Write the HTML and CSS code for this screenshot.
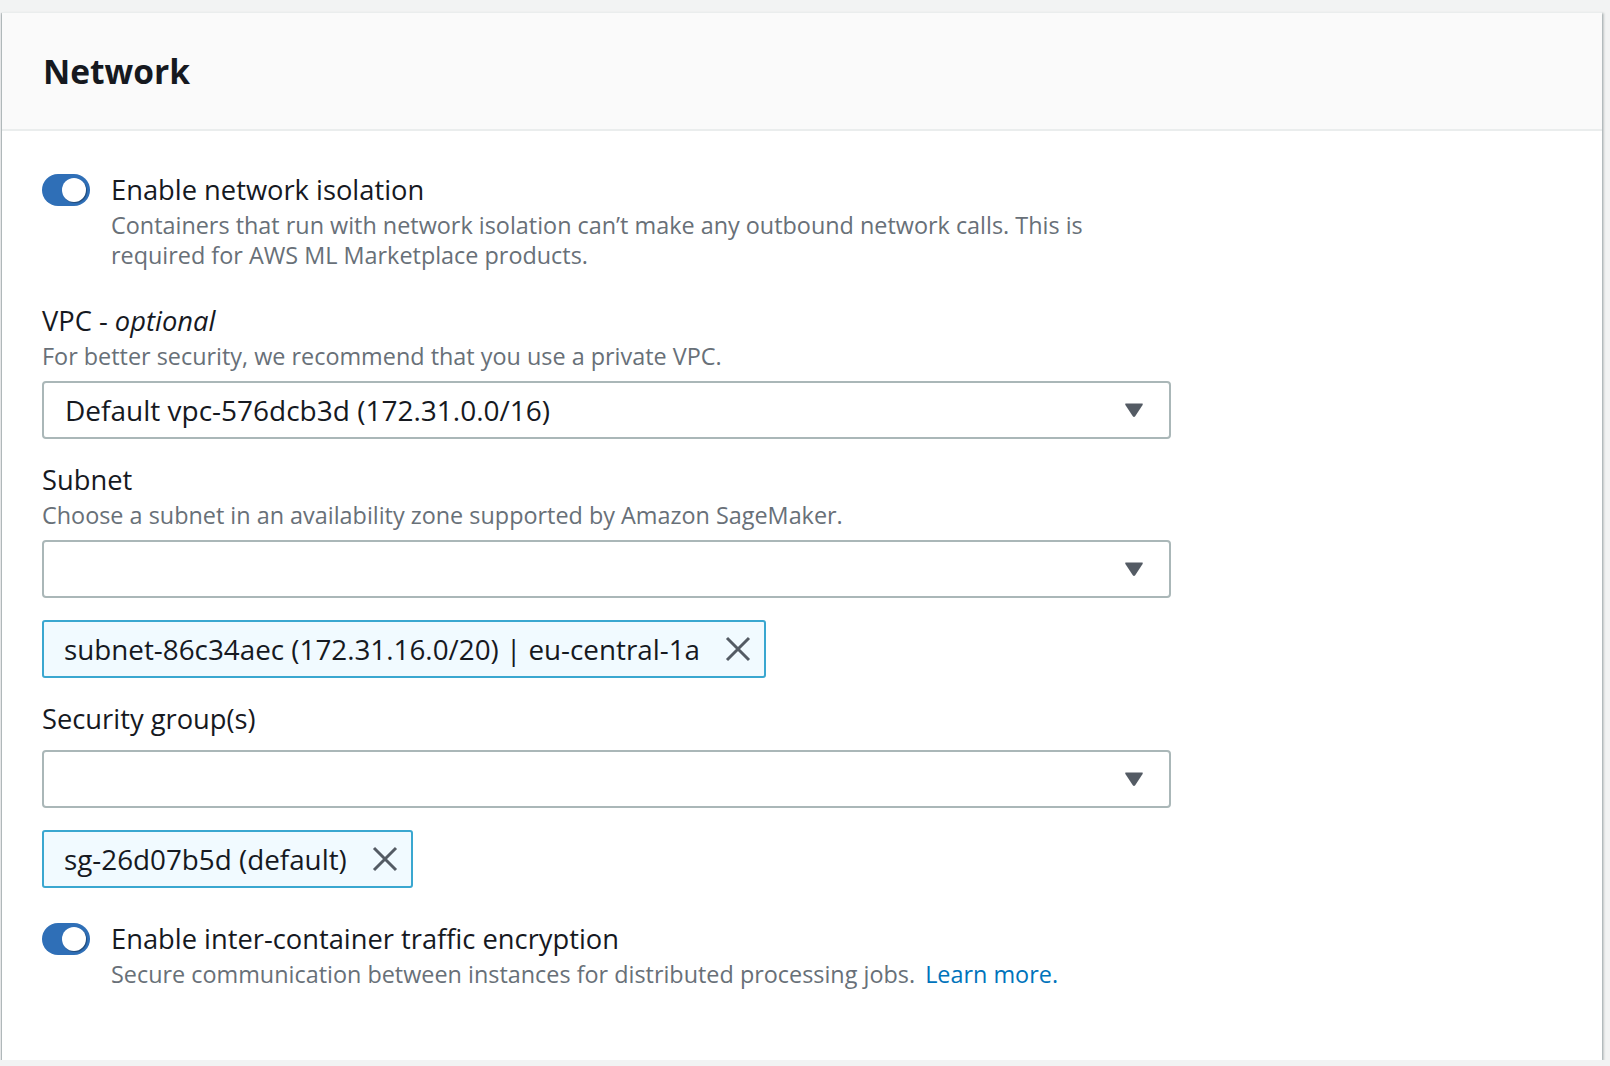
FILE: index.html
```html
<!DOCTYPE html>
<html lang="en">
<head>
<meta charset="utf-8">
<title>Network</title>
<link rel="stylesheet" href="styles.css">
</head>
<body>
<div class="page">
  <section class="card">
    <header class="card-header">
      <h2 class="card-title">Network</h2>
    </header>
    <div class="card-body">
      <div class="toggle-field">
        <span class="toggle"><span class="knob"></span></span>
        <div class="toggle-text">
          <div class="label">Enable network isolation</div>
          <div class="desc">Containers that run with network isolation can’t make any outbound network calls. This is<br>required for AWS ML Marketplace products.</div>
        </div>
      </div>

      <div class="field field-vpc">
        <div class="label">VPC - <i>optional</i></div>
        <div class="desc">For better security, we recommend that you use a private VPC.</div>
        <div class="select">
          <span class="select-value">Default vpc-576dcb3d (172.31.0.0/16)</span>
          <svg class="caret" width="20" height="16" viewBox="0 0 20 16"><path d="M2 1.5 H18 Q19.5 1.5 18.6 2.9 L11.2 14.2 Q10 15.8 8.8 14.2 L1.4 2.9 Q0.5 1.5 2 1.5 Z" fill="#545b64"/></svg>
        </div>
      </div>

      <div class="field">
        <div class="label">Subnet</div>
        <div class="desc">Choose a subnet in an availability zone supported by Amazon SageMaker.</div>
        <div class="select">
          <span class="select-value"></span>
          <svg class="caret" width="20" height="16" viewBox="0 0 20 16"><path d="M2 1.5 H18 Q19.5 1.5 18.6 2.9 L11.2 14.2 Q10 15.8 8.8 14.2 L1.4 2.9 Q0.5 1.5 2 1.5 Z" fill="#545b64"/></svg>
        </div>
        <div class="token">
          <span class="token-text">subnet-86c34aec (172.31.16.0/20) | eu-central-1a</span>
          <svg class="dismiss" width="26" height="26" viewBox="0 0 26 26"><path d="M2 2 L24 24 M24 2 L2 24" stroke="#545b64" stroke-width="3" fill="none"/></svg>
        </div>
      </div>

      <div class="field">
        <div class="label">Security group(s)</div>
        <div class="select select-nodesc">
          <span class="select-value"></span>
          <svg class="caret" width="20" height="16" viewBox="0 0 20 16"><path d="M2 1.5 H18 Q19.5 1.5 18.6 2.9 L11.2 14.2 Q10 15.8 8.8 14.2 L1.4 2.9 Q0.5 1.5 2 1.5 Z" fill="#545b64"/></svg>
        </div>
        <div class="token">
          <span class="token-text">sg-26d07b5d (default)</span>
          <svg class="dismiss" width="26" height="26" viewBox="0 0 26 26"><path d="M2 2 L24 24 M24 2 L2 24" stroke="#545b64" stroke-width="3" fill="none"/></svg>
        </div>
      </div>

      <div class="toggle-field toggle-field-last">
        <span class="toggle"><span class="knob"></span></span>
        <div class="toggle-text">
          <div class="label">Enable inter-container traffic encryption</div>
          <div class="desc">Secure communication between instances for distributed processing jobs. <a class="link" href="#">Learn more.</a></div>
        </div>
      </div>
    </div>
  </section>
</div>
</body>
</html>
```

FILE: styles.css
```css
html, body {
  margin: 0;
  padding: 0;
  background: #f2f3f3;
}

body {
  font-family: "Open Sans", "Noto Sans", "Liberation Sans", sans-serif;
  color: #16191f;
}

.page {
  padding: 12px 0 0 2px;
  width: 1600px;
}

.card {
  background: #ffffff;
  width: 1600px;
  height: 1048px;
  box-sizing: border-box;
  box-shadow: 0 2px 2px 0 rgba(0, 28, 36, 0.35), 2px 1px 2px 0 rgba(0, 28, 36, 0.18), -1px 1px 1px 0 rgba(0, 28, 36, 0.18);
  border-top: 1px solid #eaeded;
}

.card-header {
  background: #fafafa;
  border-bottom: 2px solid #eaeded;
  padding: 36px 40px 36px 41px;
}

.card-title {
  margin: 0;
  font-size: 33.5px;
  line-height: 44px;
  font-weight: 700;
  color: #16191f;
}

.card-body {
  padding: 40px 40px 0 40px;
}

.label {
  font-size: 27.3px;
  line-height: 38px;
  color: #16191f;
}

.desc {
  font-size: 23.4px;
  line-height: 30px;
  color: #687078;
}

.toggle-field {
  display: flex;
  align-items: flex-start;
  gap: 21px;
}

.toggle {
  flex: none;
  width: 48px;
  height: 32px;
  margin-top: 3px;
  border-radius: 16px;
  background: #2f6fb7;
  display: flex;
  align-items: center;
  justify-content: flex-end;
  padding-right: 4px;
  box-sizing: border-box;
}

.knob {
  width: 24px;
  height: 24px;
  border-radius: 50%;
  background: #ffffff;
  box-shadow: 1px 1px 1px 0 rgba(0, 0, 0, 0.35);
}

.toggle-text .desc {
  margin-top: 1px;
}

.field {
  margin-top: 22px;
}

.field-vpc {
  margin-top: 32px;
}

.field .desc {
  margin-top: 1px;
}

.select {
  margin-top: 10px;
  width: 1129px;
  height: 58px;
  box-sizing: border-box;
  border: 2px solid #aab7b8;
  border-radius: 4px;
  background: #ffffff;
  display: flex;
  align-items: center;
  justify-content: space-between;
  padding: 0 25px 0 21px;
}

.select-nodesc {
  margin-top: 12px;
}

.select-value {
  font-size: 28px;
  line-height: 38px;
  color: #16191f;
}

.caret {
  display: block;
  flex: none;
}

.token {
  margin-top: 22px;
  display: inline-flex;
  align-items: center;
  height: 58px;
  box-sizing: border-box;
  border: 2px solid #3aa7d0;
  border-radius: 3px;
  background: #f1faff;
  padding: 0 13px 0 20px;
  gap: 25px;
}

.token-text {
  font-size: 27.8px;
  line-height: 38px;
  color: #16191f;
}

.dismiss {
  display: block;
  flex: none;
}

.toggle-field-last {
  margin-top: 32px;
}

.link {
  color: #0073bb;
  text-decoration: none;
  margin-left: 4px;
}
```
